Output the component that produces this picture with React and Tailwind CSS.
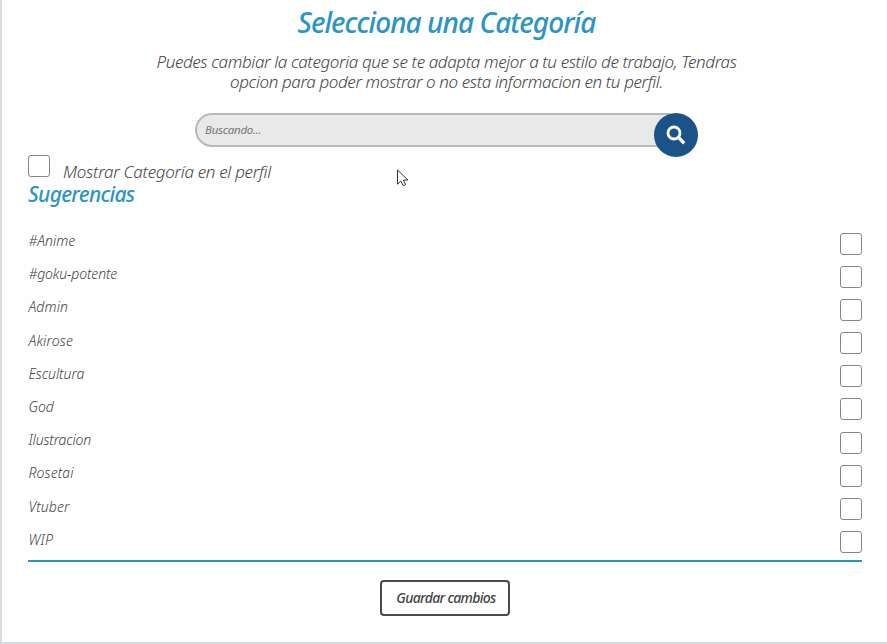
const categories = [
  { name: '#Anime', tracking: 'tracking-[0px]' },
  { name: '#goku-potente', tracking: 'tracking-[-0.13px]' },
  { name: 'Admin', tracking: 'tracking-[0.1px]' },
  { name: 'Akirose', tracking: 'tracking-[0.14px]' },
  { name: 'Escultura', tracking: 'tracking-[-0.05px]' },
  { name: 'God', tracking: 'tracking-[-0.1px]' },
  { name: 'Ilustracion', tracking: 'tracking-[-0.15px]' },
  { name: 'Rosetai', tracking: 'tracking-[0.1px]' },
  { name: 'Vtuber', tracking: 'tracking-[0.1px]' },
  { name: 'WIP', tracking: 'tracking-[0.2px]' },
];

function Checkbox({ label }) {
  return (
    <input
      type="checkbox"
      aria-label={label}
      className="block size-[22px] shrink-0 appearance-none rounded-[3px] border border-[#85878b] bg-white"
    />
  );
}

function SearchBar() {
  return (
    <div className="mt-[21px] ml-[167px] flex h-[44px] w-[503px] items-start">
      <input
        type="text"
        placeholder="Buscando..."
        className="h-[34px] w-[475px] shrink-0 rounded-l-full border-2 border-[#b9b9b9] bg-[#e9e9e9] pb-0.5 pl-2 text-[11.5px] tracking-[-0.25px] italic placeholder:text-[#777]"
      />
      <button
        type="button"
        aria-label="Buscar"
        className="-ml-4 flex size-[44px] shrink-0 items-center justify-center rounded-full bg-[#1b5288]"
      >
        <svg viewBox="0 0 20 20" className="mb-px size-5" fill="none" stroke="#fff">
          <circle cx="8" cy="8" r="6" strokeWidth="2.8" />
          <path d="M12.4 12.4 18.2 18.2" strokeWidth="3.4" />
        </svg>
      </button>
    </div>
  );
}

function Cursor() {
  return (
    <svg className="absolute top-[169px] left-[394px] h-[18px] w-[13px]" viewBox="0 0 13 18">
      <path
        d="M1.5 1v14.2l3.4-3.2 2.2 4.7 2.5-1.1-2.2-4.6h4.5z"
        fill="#fff"
        stroke="#33333c"
        strokeWidth="1"
      />
    </svg>
  );
}

export default function App() {
  return (
    <main className="relative h-[644px] w-[887px] overflow-hidden border-b-2 border-l-2 border-[#d8dbe0] bg-[#fefefe] pr-[25px] pl-[26px] font-['Noto_Sans',sans-serif] text-[#444] italic">
      <h1 className="mt-[2px] pl-[3px] text-center text-[28px] leading-[40px] font-medium tracking-[-0.95px] text-[#2c95c2]">
        Selecciona una Categoría
      </h1>
      <p className="mt-[10px] pl-[3px] text-center text-[17px] leading-5 font-light tracking-[-0.38px] whitespace-nowrap">
        Puedes cambiar la categoria que se te adapta mejor a tu estilo de trabajo, Tendras
        <br />
        opcion para poder mostrar o no esta informacion en tu perfil.
      </p>
      <SearchBar />
      <label className="-mt-[2px] flex h-[25px] items-start">
        <Checkbox label="Mostrar Categoría en el perfil" />
        <span className="mt-[5px] ml-[13px] text-[17px] leading-6 font-light tracking-[-0.3px]">
          Mostrar Categoría en el perfil
        </span>
      </label>
      <h2 className="text-[21px] leading-[28px] font-medium tracking-[-0.7px] text-[#2c95c2]">Sugerencias</h2>
      <ul className="mt-[20px] border-b-2 border-[#2c95bd]">
        {categories.map(({ name, tracking }) => (
          <li key={name} className="flex h-[33.2px] items-start justify-between">
            <span className={`mt-[3px] ml-[0.5px] text-[14px] leading-5 font-light ${tracking}`}>{name}</span>
            <div className="mt-[4.5px]">
              <Checkbox label={name} />
            </div>
          </li>
        ))}
      </ul>
      <div className="mt-[18px] flex justify-center">
        <button
          type="button"
          className="h-9 w-[130px] rounded-[4px] border-2 border-[#4a4a4a] bg-[#fefefe] pl-0.5 text-[14px] font-medium tracking-[-0.7px] whitespace-nowrap italic"
        >
          Guardar cambios
        </button>
      </div>
      <Cursor />
    </main>
  );
}
